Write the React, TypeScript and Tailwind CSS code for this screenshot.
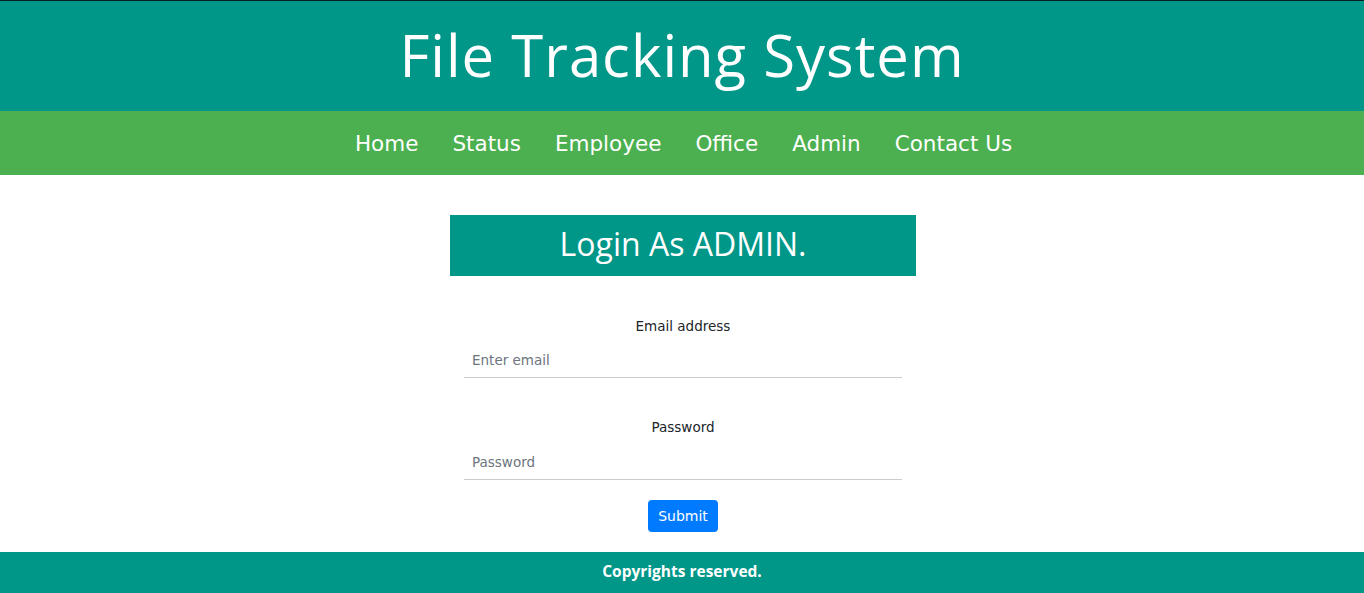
import React from "react";

export default function App() {
  const nav = ["Home", "Status", "Employee", "Office", "Admin", "Contact Us"];
  return (
    <div className="w-full min-h-[593px] flex flex-col bg-white">
      <header className="border-t border-[#0b1f26] bg-[#009688] h-[111px] flex items-center justify-center">
        <h1 className="text-white text-[58px] leading-none font-['Open_Sans',sans-serif] tracking-[1px] -mt-[2px]">
          File Tracking System
        </h1>
      </header>
      <nav className="bg-[#4caf50] h-[64px] flex items-center justify-center gap-[34px] font-['DejaVu_Sans',sans-serif] text-[21.5px] text-white pt-[3px] pl-[3px]">
        {nav.map((n) => (
          <a key={n} className="cursor-pointer">
            {n}
          </a>
        ))}
      </nav>
      <main className="flex-1 flex justify-center pt-[40px] pb-[19px] pl-[2px]">
        <div className="w-[466px] flex flex-col">
          <div className="bg-[#009688] h-[61px] flex items-center justify-center">
            <h2 className="text-white text-[32px] font-['Open_Sans',sans-serif] leading-none -mt-[3px]">
              Login As ADMIN.
            </h2>
          </div>
          <form className="px-[14px] pt-[40px] flex flex-col font-['DejaVu_Sans',sans-serif]">
            <label className="text-center text-[13.5px] leading-[20px] text-[#212529] mb-[7px]">
              Email address
            </label>
            <input
              type="email"
              placeholder="Enter email"
              className="h-[35px] px-[8px] text-[13.5px] border-b border-[#cccccc] outline-none placeholder:text-[#6c757d]"
            />
            <label className="text-center text-[13.5px] leading-[20px] text-[#212529] mt-[39px] mb-[8px]">
              Password
            </label>
            <input
              type="password"
              placeholder="Password"
              className="h-[35px] px-[8px] text-[13.5px] border-b border-[#cccccc] outline-none placeholder:text-[#6c757d]"
            />
            <div className="flex justify-center mt-[20px]">
              <button
                type="button"
                className="bg-[#007bff] text-white text-[14px] h-[32px] w-[70px] rounded-[4px]"
              >
                Submit
              </button>
            </div>
          </form>
        </div>
      </main>
      <footer className="bg-[#009688] h-[41px] flex items-center justify-center">
        <span className="text-white text-[15.5px] font-bold font-['Open_Sans',sans-serif] -mt-[2px]">
          Copyrights reserved.
        </span>
      </footer>
    </div>
  );
}
